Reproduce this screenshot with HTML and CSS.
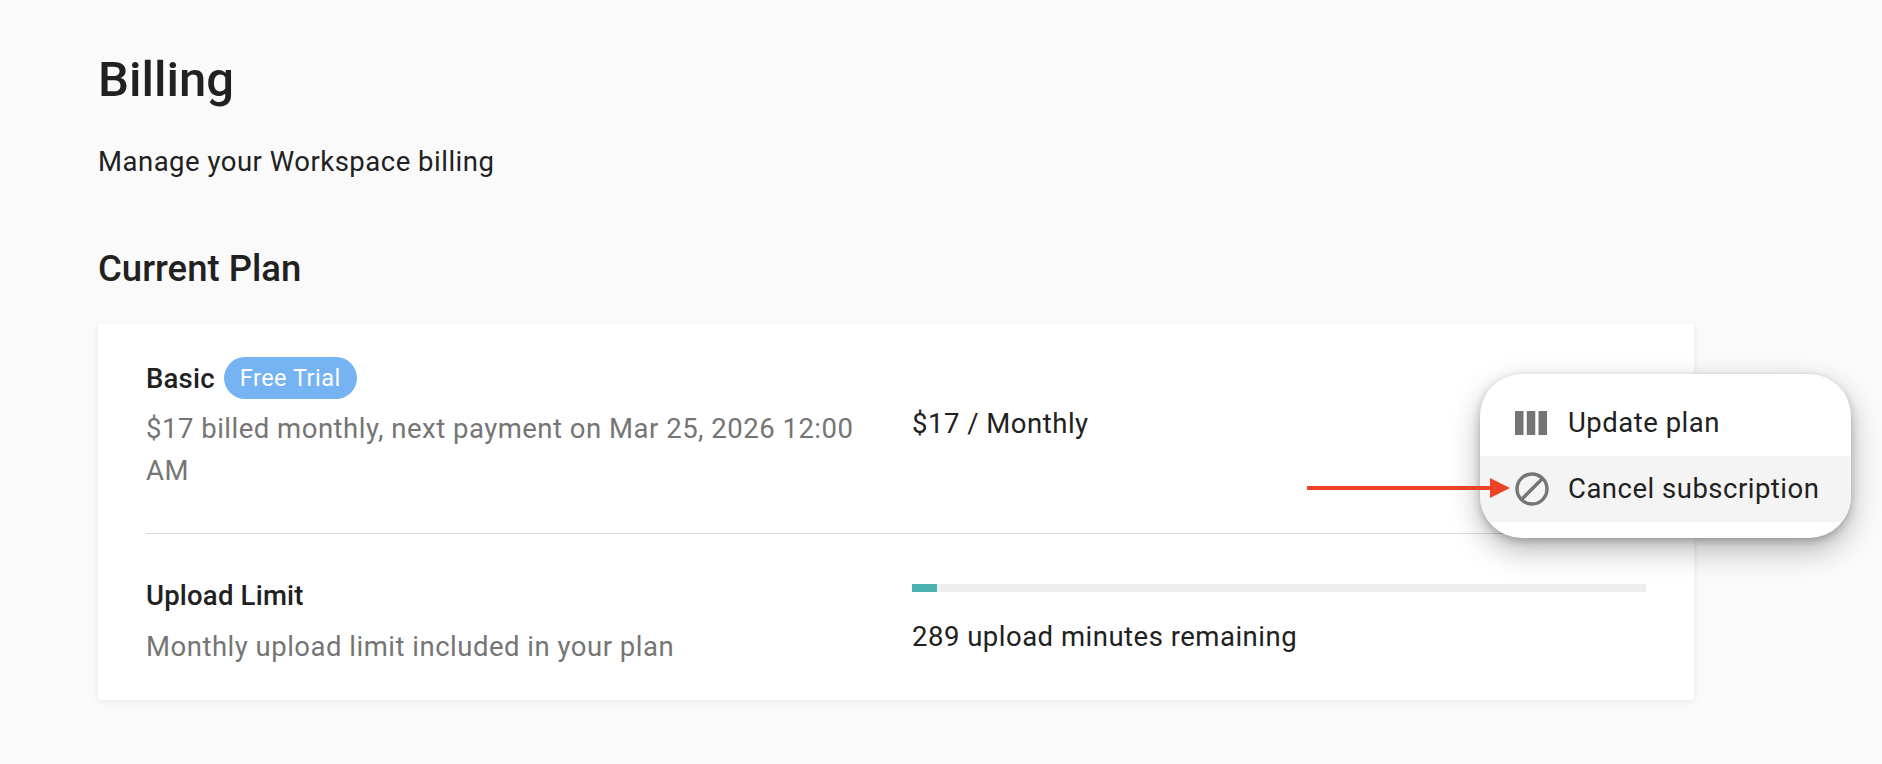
FILE: index.html
```html
<!DOCTYPE html>
<html lang="en">
<head>
  <meta charset="UTF-8">
  <title>Billing</title>
  <link rel="stylesheet" href="styles.css">
</head>
<body>
  <h1 class="page-title">Billing</h1>
  <p class="page-subtitle">Manage your Workspace billing</p>
  <h2 class="section-title">Current Plan</h2>

  <div class="plan-card">
    <div class="plan-row plan-row-top">
      <div class="plan-col">
        <div class="plan-name-line">
          <span class="plan-name">Basic</span>
          <span class="badge">Free Trial</span>
        </div>
        <div class="plan-desc">$17 billed monthly, next payment on Mar 25, 2026 12:00 AM</div>
      </div>
      <div class="plan-col plan-price-col">
        <span class="plan-price">$17 / Monthly</span>
        <span class="manage-button"></span>
      </div>
    </div>
    <div class="plan-divider"></div>
    <div class="plan-row plan-row-bottom">
      <div class="plan-col">
        <div class="plan-name limit-name">Upload Limit</div>
        <div class="plan-desc">Monthly upload limit included in your plan</div>
      </div>
      <div class="plan-col">
        <div class="progress"><div class="progress-fill" style="width: 3.4%"></div></div>
        <div class="progress-label">289 upload minutes remaining</div>
      </div>
    </div>
  </div>

  <div class="menu">
    <div class="menu-item">
      <svg class="menu-icon" viewBox="0 0 34 34" width="34" height="34">
        <path d="M0 5h8.5v24H0zM11.75 5h8.5v24h-8.5zM23.5 5H32v24h-8.5z" fill="#757575"/>
      </svg>
      <span>Update plan</span>
    </div>
    <div class="menu-item menu-item-active">
      <svg class="menu-icon" viewBox="0 0 34 34" width="34" height="34">
        <circle cx="17" cy="17" r="15" fill="none" stroke="#757575" stroke-width="3.4"/>
        <path d="M6.5 27.5L27.5 6.5" stroke="#757575" stroke-width="3.4"/>
      </svg>
      <span>Cancel subscription</span>
    </div>
  </div>

  <svg class="arrow" viewBox="0 0 203 22" width="203" height="22">
    <path d="M0 9h184v4H0z" fill="#ee4426"/>
    <path d="M183 1l20 10-20 10z" fill="#ee4426"/>
  </svg>
</body>
</html>
```

FILE: styles.css
```css
body {
  margin: 0;
  padding: 0 98px;
  height: 764px;
  box-sizing: border-box;
  overflow: hidden;
  position: relative;
  background-color: #fafafa;
  font-family: Roboto, sans-serif;
  color: #212121;
}

.page-title {
  margin: 0;
  padding-top: 52px;
  font-size: 49px;
  line-height: 56px;
  font-weight: 500;
}

.page-subtitle {
  margin: 36px 0 0;
  font-size: 27.5px;
  line-height: 36px;
  letter-spacing: 0.5px;
}

.section-title {
  margin: 68px 0 0;
  font-size: 36.5px;
  line-height: 42px;
  font-weight: 500;
}

.plan-card {
  margin-top: 34px;
  width: 1596px;
  height: 376px;
  box-sizing: border-box;
  padding: 33px 48px 0;
  background-color: #fff;
  box-shadow: 0 2px 6px rgba(0, 0, 0, 0.08);
}

.plan-row {
  display: grid;
  grid-template-columns: 766px 734px;
}

.plan-row-top {
  height: 176px;
}

.plan-row-bottom {
  padding-top: 44px;
}

.plan-col {
  min-width: 0;
}

.plan-name-line {
  display: flex;
  align-items: center;
  gap: 9px;
  height: 42px;
}

.plan-name {
  font-size: 27.5px;
  font-weight: 500;
  letter-spacing: 0.2px;
}

.badge {
  height: 42px;
  line-height: 42px;
  padding: 0 16px;
  border-radius: 21px;
  background-color: #75b3f2;
  color: #fff;
  font-size: 23.5px;
  letter-spacing: 0.5px;
}

.plan-desc {
  margin-top: 9px;
  width: 720px;
  font-size: 27.5px;
  line-height: 42px;
  letter-spacing: 0.5px;
  color: #757575;
}

.plan-price-col {
  position: relative;
  display: flex;
  align-items: flex-start;
  justify-content: space-between;
  padding-top: 49px;
}

.plan-price {
  font-size: 27.5px;
  line-height: 36px;
  letter-spacing: 0.5px;
}

.manage-button {
  position: absolute;
  top: 45px;
  right: 0;
  width: 166px;
  height: 42px;
  border-radius: 21px;
  background-color: #4db2b0;
}

.plan-divider {
  height: 1px;
  background-color: #d9d9d9;
}

.limit-name {
  line-height: 36px;
}

.limit-name + .plan-desc {
  margin-top: 12px;
}

.progress {
  margin-top: 6px;
  height: 8px;
  background-color: #eee;
}

.progress-fill {
  height: 100%;
  background-color: #4db2b0;
}

.progress-label {
  margin-top: 27px;
  font-size: 27.5px;
  line-height: 36px;
  letter-spacing: 0.5px;
}

.menu {
  position: absolute;
  left: 1480px;
  top: 374px;
  width: 371px;
  height: 164px;
  box-sizing: border-box;
  padding-top: 16px;
  border-radius: 42px;
  background-color: #fff;
  box-shadow: 0 12px 30px rgba(0, 0, 0, 0.28), 0 3px 8px rgba(0, 0, 0, 0.22);
  overflow: hidden;
}

.menu-item {
  display: flex;
  align-items: center;
  gap: 19px;
  height: 66px;
  padding-left: 35px;
  font-size: 27.5px;
  letter-spacing: 0.5px;
}

.menu-item span {
  margin-top: -2px;
}

.menu-item-active {
  background-color: #f4f4f4;
}

.arrow {
  position: absolute;
  left: 1307px;
  top: 477px;
}
```
